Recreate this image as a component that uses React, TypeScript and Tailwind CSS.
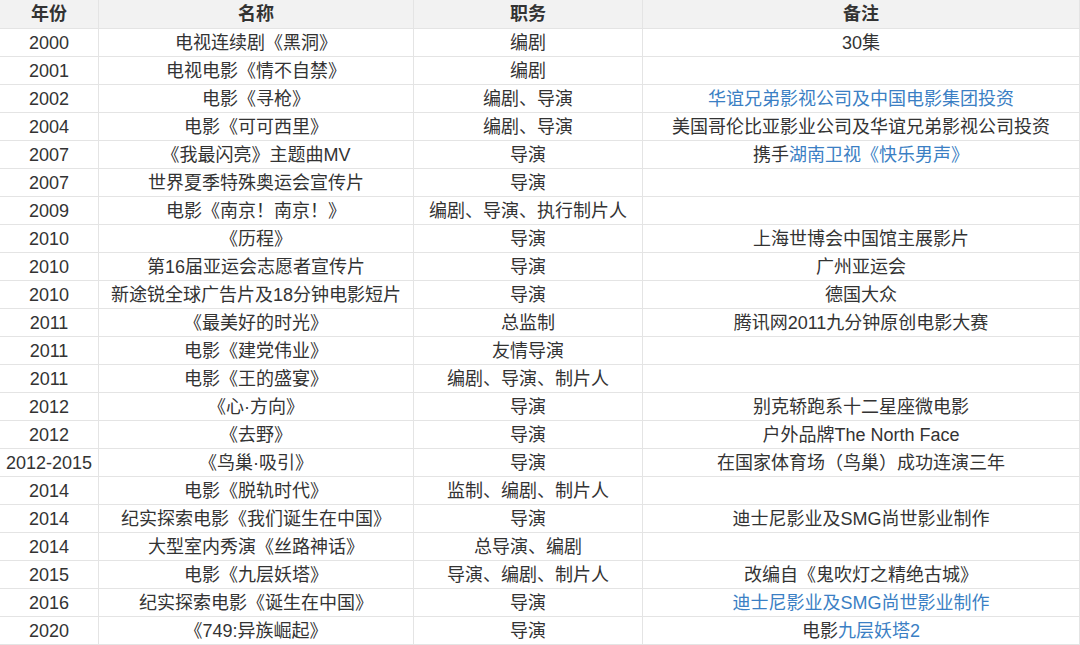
type Part = string | { link: string };

type Row = {
  year: string;
  name: string;
  role: string;
  note: Part[];
};

const rows: Row[] = [
  { year: "2000", name: "电视连续剧《黑洞》", role: "编剧", note: ["30集"] },
  { year: "2001", name: "电视电影《情不自禁》", role: "编剧", note: [] },
  { year: "2002", name: "电影《寻枪》", role: "编剧、导演", note: [{ link: "华谊兄弟影视公司及中国电影集团投资" }] },
  { year: "2004", name: "电影《可可西里》", role: "编剧、导演", note: ["美国哥伦比亚影业公司及华谊兄弟影视公司投资"] },
  { year: "2007", name: "《我最闪亮》主题曲MV", role: "导演", note: ["携手", { link: "湖南卫视《快乐男声》" }] },
  { year: "2007", name: "世界夏季特殊奥运会宣传片", role: "导演", note: [] },
  { year: "2009", name: "电影《南京！南京！》", role: "编剧、导演、执行制片人", note: [] },
  { year: "2010", name: "《历程》", role: "导演", note: ["上海世博会中国馆主展影片"] },
  { year: "2010", name: "第16届亚运会志愿者宣传片", role: "导演", note: ["广州亚运会"] },
  { year: "2010", name: "新途锐全球广告片及18分钟电影短片", role: "导演", note: ["德国大众"] },
  { year: "2011", name: "《最美好的时光》", role: "总监制", note: ["腾讯网2011九分钟原创电影大赛"] },
  { year: "2011", name: "电影《建党伟业》", role: "友情导演", note: [] },
  { year: "2011", name: "电影《王的盛宴》", role: "编剧、导演、制片人", note: [] },
  { year: "2012", name: "《心·方向》", role: "导演", note: ["别克轿跑系十二星座微电影"] },
  { year: "2012", name: "《去野》", role: "导演", note: ["户外品牌The North Face"] },
  { year: "2012-2015", name: "《鸟巢·吸引》", role: "导演", note: ["在国家体育场（鸟巢）成功连演三年"] },
  { year: "2014", name: "电影《脱轨时代》", role: "监制、编剧、制片人", note: [] },
  { year: "2014", name: "纪实探索电影《我们诞生在中国》", role: "导演", note: ["迪士尼影业及SMG尚世影业制作"] },
  { year: "2014", name: "大型室内秀演《丝路神话》", role: "总导演、编剧", note: [] },
  { year: "2015", name: "电影《九层妖塔》", role: "导演、编剧、制片人", note: ["改编自《鬼吹灯之精绝古城》"] },
  { year: "2016", name: "纪实探索电影《诞生在中国》", role: "导演", note: [{ link: "迪士尼影业及SMG尚世影业制作" }] },
  { year: "2020", name: "《749:异族崛起》", role: "导演", note: ["电影", { link: "九层妖塔2" }] },
];

const cell = "border border-[#e4e4e4] h-[28px] p-0 text-center align-middle whitespace-nowrap";

export default function App() {
  return (
    <div className="w-[1080px] h-[645px] overflow-hidden bg-white font-['Liberation_Sans','Noto_Sans_CJK_SC',sans-serif] text-[18px] leading-[22px] text-[#333]">
      <table className="table-fixed border-collapse w-[1080px] -ml-px -mt-px">
        <colgroup>
          <col className="w-[99px]" />
          <col className="w-[315px]" />
          <col className="w-[229px]" />
          <col className="w-[437px]" />
        </colgroup>
        <thead>
          <tr className="bg-[#f2f2f2]">
            <th className={`${cell} h-[29px] font-bold`}>年份</th>
            <th className={`${cell} h-[29px] font-bold`}>名称</th>
            <th className={`${cell} h-[29px] font-bold`}>职务</th>
            <th className={`${cell} h-[29px] font-bold`}>备注</th>
          </tr>
        </thead>
        <tbody>
          {rows.map((r, i) => (
            <tr key={i}>
              <td className={cell}>{r.year}</td>
              <td className={cell}>{r.name}</td>
              <td className={cell}>{r.role}</td>
              <td className={cell}>
                {r.note.map((p, j) =>
                  typeof p === "string" ? (
                    <span key={j}>{p}</span>
                  ) : (
                    <span key={j} className="text-[#3b7fc4]">
                      {p.link}
                    </span>
                  )
                )}
              </td>
            </tr>
          ))}
        </tbody>
      </table>
    </div>
  );
}
